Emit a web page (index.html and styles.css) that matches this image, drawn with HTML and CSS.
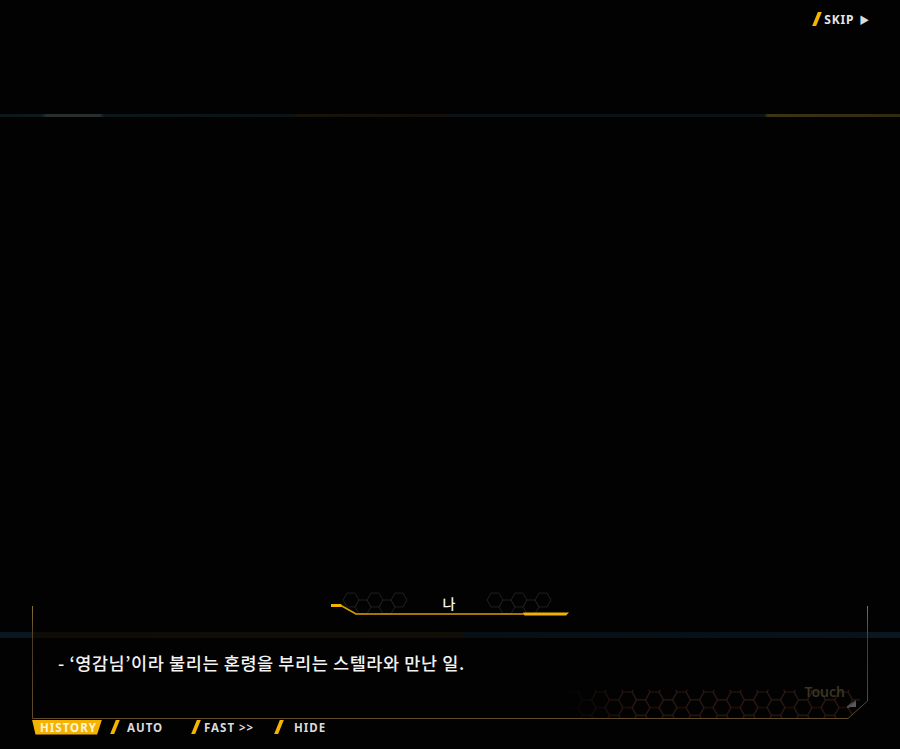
FILE: index.html
```html
<!DOCTYPE html>
<html>
<head>
  <title>Story</title>
  <link rel="stylesheet" href="styles.css">
</head>
<body>
  <div class="screen">

    <div class="topbar">
      <button class="skip"><span class="slash"></span>SKIP<span class="skip-arrow">&#9654;</span></button>
    </div>

    <div class="stage"></div>

    <div class="dialog">
      <!-- frame with the cut corner and the honeycomb strip -->
      <svg class="frame" width="836" height="113" viewBox="0 0 836 113">
        <defs>
          <polygon id="cell" points="9,0 4.5,7.8 -4.5,7.8 -9,0 -4.5,-7.8 4.5,-7.8"/>
          <pattern id="comb" width="27" height="15.6" patternUnits="userSpaceOnUse" x="528" y="86">
            <g fill="none" stroke="#241c12" stroke-width="1">
              <use href="#cell" x="0" y="0"/>
              <use href="#cell" x="27" y="0"/>
              <use href="#cell" x="0" y="15.6"/>
              <use href="#cell" x="27" y="15.6"/>
              <use href="#cell" x="13.5" y="7.8" stroke="#2e1610"/>
            </g>
          </pattern>
          <linearGradient id="fade" x1="0" x2="1" y1="0" y2="0">
            <stop offset="0" stop-color="#fff" stop-opacity="0"/>
            <stop offset="0.25" stop-color="#fff" stop-opacity="1"/>
            <stop offset="1" stop-color="#fff" stop-opacity="1"/>
          </linearGradient>
          <mask id="comb-mask">
            <rect x="528" y="84" width="300" height="29" fill="url(#fade)"/>
          </mask>
          <linearGradient id="edge" x1="0" x2="0" y1="0" y2="1">
            <stop offset="0" stop-color="#8a6f3a"/>
            <stop offset="0.3" stop-color="#4a3c22"/>
            <stop offset="1" stop-color="#5e4b28"/>
          </linearGradient>
        </defs>
        <polygon points="528,84 836,84 836,95 816,112.5 528,112.5" fill="url(#comb)" mask="url(#comb-mask)"/>
        <path d="M0.5,0 V112.5 H816 L835.5,95 V0" fill="none" stroke="url(#edge)" stroke-width="1"/>
      </svg>

      <div class="nameplate">
        <svg width="240" height="26" viewBox="0 0 240 26">
          <defs>
            <polygon id="tag-cell" points="8,0 4,6.9 -4,6.9 -8,0 -4,-6.9 4,-6.9"/>
          </defs>
          <g fill="none" stroke="#1f1f1f" stroke-width="1">
            <use href="#tag-cell" x="22" y="8"/>
            <use href="#tag-cell" x="34" y="14.9"/>
            <use href="#tag-cell" x="46" y="8"/>
            <use href="#tag-cell" x="58" y="14.9"/>
            <use href="#tag-cell" x="70" y="8"/>
            <use href="#tag-cell" x="166" y="8"/>
            <use href="#tag-cell" x="178" y="14.9"/>
            <use href="#tag-cell" x="190" y="8"/>
            <use href="#tag-cell" x="202" y="14.9"/>
            <use href="#tag-cell" x="214" y="8"/>
          </g>
          <polygon points="2,12 12,12 14,15 2,15" fill="#f2b200"/>
          <path d="M12,13.5 L27,22 H196" fill="none" stroke="#d99f00" stroke-width="1.6"/>
          <polygon points="194,20.5 240,20.5 237,23.5 195.5,23.5" fill="#f2b200"/>
        </svg>
        <span class="speaker">나</span>
      </div>

      <p class="line">- ‘영감님’이라 불리는 혼령을 부리는 스텔라와 만난 일.</p>

      <div class="touch">Touch</div>
      <svg class="touch-arrow" width="9" height="8" viewBox="0 0 9 8">
        <polygon points="9,0 9,1 2,8 0,8 0,6" fill="#4a4a4a"/>
        <polygon points="9,1 9,7 2,7" fill="#5a5a5a"/>
      </svg>
    </div>

    <div class="menu">
      <button class="menu-item history">HISTORY</button>
      <button class="menu-item auto"><span class="slash"></span>AUTO</button>
      <button class="menu-item fast"><span class="slash"></span>FAST &gt;&gt;</button>
      <button class="menu-item hide"><span class="slash"></span>HIDE</button>
    </div>

  </div>
</body>
</html>
```

FILE: styles.css
```css
body {
  margin: 0;
  background: #020202;
  font-family: "Noto Sans", "Noto Sans CJK KR", sans-serif;
}

.screen {
  width: 900px;
  height: 749px;
  display: flex;
  flex-direction: column;
  overflow: hidden;
  background-color: #020202;
  background-image:
    /* horizon streak behind the scene */
    linear-gradient(to right, #0b181b 0, #0e1b1e 42px, #262e2e 46px, #262e2e 100px, #0c171a 104px, #0a1416 290px, #19130a 300px, #140f08 440px, #0a1315 455px, #0a1315 764px, #3c3414 768px, #302a10 900px),
    /* glow band under the text box */
    linear-gradient(to right, #0a1620 0, #0a1620 32px, #0f0c07 34px, #110d07 460px, #080f14 466px, #09111a 866px, #0b1620 870px, #0a1620 900px);
  background-size: 100% 3px, 100% 6px;
  background-position: 0 114px, 0 632px;
  background-repeat: no-repeat;
}

button {
  background: none;
  border: none;
  padding: 0;
  font-family: inherit;
  cursor: pointer;
}

.slash {
  display: inline-block;
  width: 4px;
  height: 14px;
  background: #f5b400;
  transform: skewX(-22deg);
}

.topbar {
  height: 38px;
  display: flex;
  justify-content: flex-end;
  align-items: center;
  padding-right: 30px;
}

.skip {
  display: flex;
  align-items: center;
  gap: 5px;
  color: #e6e6e6;
  font-size: 12px;
  font-weight: 700;
  letter-spacing: 0.8px;
}

.skip-arrow {
  font-size: 10px;
  color: #dcdcdc;
}

.stage {
  flex: 1;
}

.dialog {
  position: relative;
  height: 113px;
  margin: 0 32px;
  padding: 45px 26px 0;
  box-sizing: border-box;
}

.frame {
  position: absolute;
  left: 0;
  top: 0;
}

.nameplate {
  position: absolute;
  top: -14px;
  left: 50%;
  margin-left: -121px;
  width: 240px;
  height: 26px;
}

.nameplate svg {
  display: block;
}

.speaker {
  position: absolute;
  left: 0;
  right: 0;
  top: 3px;
  text-align: center;
  color: #f4f4f4;
  font-family: "Noto Sans CJK KR", sans-serif;
  font-size: 14px;
  font-weight: 500;
  line-height: 16px;
}

.line {
  position: relative;
  margin: 0;
  color: #f2f2f2;
  font-family: "Noto Sans CJK KR", sans-serif;
  font-size: 17.5px;
  font-weight: 500;
  letter-spacing: 0.6px;
  line-height: 24px;
}

.touch {
  position: absolute;
  right: 23px;
  top: 77px;
  color: #3a3420;
  font-size: 14px;
  font-weight: 600;
  line-height: 18px;
}

.touch-arrow {
  position: absolute;
  right: 12px;
  top: 94px;
}

.menu {
  height: 16px;
  margin: 0 32px 14px;
  display: flex;
  align-items: center;
}

.menu-item {
  display: flex;
  align-items: center;
  height: 16px;
  color: #dadada;
  font-size: 11.5px;
  font-weight: 700;
  letter-spacing: 1px;
}

.history {
  width: 70px;
  height: 15px;
  justify-content: center;
  padding-left: 3px;
  box-sizing: border-box;
  background: #f5b300;
  color: #fff4dc;
  clip-path: polygon(0 0, 100% 0, 93% 100%, 5% 100%);
}

.auto {
  margin-left: 11px;
  width: 81px;
  gap: 10px;
}

.fast {
  width: 83px;
  gap: 6px;
}

.hide {
  gap: 13px;
}
```
